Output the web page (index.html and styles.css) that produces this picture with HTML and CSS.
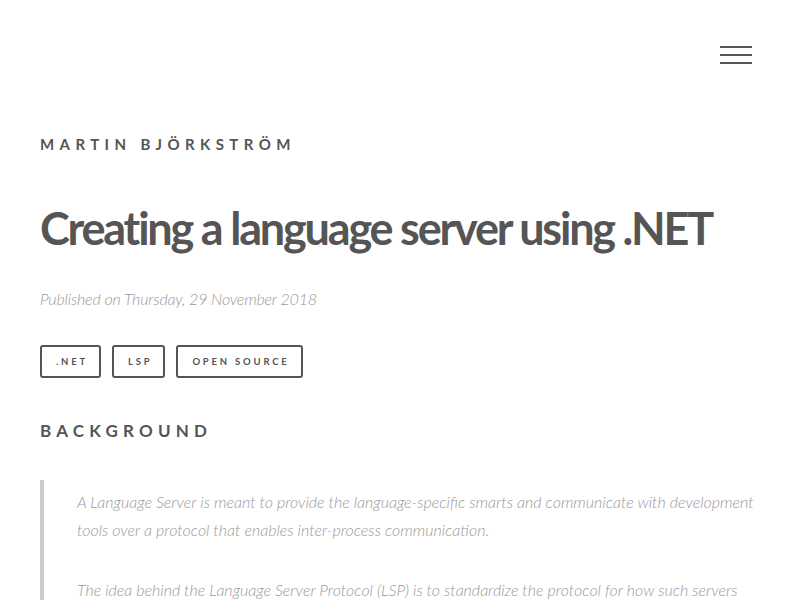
FILE: index.html
```html
<!DOCTYPE html>
<html>
<head>
<meta charset="utf-8">
<link rel="stylesheet" href="styles.css">
</head>
<body>
<header class="topbar">
  <button class="menu" aria-label="Menu"><span></span><span></span><span></span></button>
</header>
<main class="content">
  <div class="author">Martin Björkström</div>
  <h1 class="title">Creating a language server using .NET</h1>
  <p class="meta">Published on Thursday, 29 November 2018</p>
  <ul class="tags">
    <li class="tag">.NET</li>
    <li class="tag">LSP</li>
    <li class="tag">Open Source</li>
  </ul>
  <h2 class="section">Background</h2>
  <blockquote class="quote">
    <p>A Language Server is meant to provide the language-specific smarts and communicate with development tools over a protocol that enables inter-process communication.</p>
    <p>The idea behind the Language Server Protocol (LSP) is to standardize the protocol for how such servers and development tools communicate.</p>
  </blockquote>
</main>
</body>
</html>
```
FILE: styles.css
```css
html, body {
  margin: 0;
  padding: 0;
  background: #fff;
  overflow: hidden;
}
body {
  font-family: Lato, "Open Sans", sans-serif;
  color: #555;
}
.topbar {
  display: flex;
  justify-content: flex-end;
  padding: 46px 48px 0 0;
  height: 34px;
}
.menu {
  display: flex;
  flex-direction: column;
  gap: 6px;
  width: 32px;
  padding: 0;
  border: 0;
  background: none;
}
.menu span {
  display: block;
  height: 2px;
  background: #555;
}
.content {
  padding: 0 40px;
}
.author {
  margin-top: 54px;
  font-size: 15px;
  font-weight: 700;
  letter-spacing: 5.4px;
  text-transform: uppercase;
  line-height: 20px;
}
.title {
  margin: 46px 0 0;
  font-size: 45px;
  font-weight: 700;
  letter-spacing: -2.2px;
  line-height: 56px;
}
.meta {
  margin: 33px 0 0;
  font-size: 16px;
  font-style: italic;
  font-weight: 300;
  color: #999;
  line-height: 20px;
  letter-spacing: -0.17px;
}
.tags {
  list-style: none;
  display: flex;
  gap: 11px;
  margin: 36px 0 0;
  padding: 0;
}
.tag {
  box-sizing: border-box;
  height: 33px;
  display: flex;
  align-items: center;
  padding: 0 11px 0 14px;
  border: 2px solid #555;
  border-radius: 3px;
  font-size: 9.5px;
  font-weight: 700;
  letter-spacing: 2.8px;
  text-transform: uppercase;
}
.section {
  margin: 42px 0 0;
  font-size: 17px;
  font-weight: 700;
  letter-spacing: 5.2px;
  text-transform: uppercase;
  line-height: 22px;
}
.quote {
  margin: 38px 0 0;
  padding: 8px 0 0 33px;
  border-left: 4px solid #ccc;
}
.quote p {
  margin: 0 0 32px;
  font-size: 16px;
  font-style: italic;
  font-weight: 300;
  color: #999;
  line-height: 28px;
  letter-spacing: 0;
}
```
